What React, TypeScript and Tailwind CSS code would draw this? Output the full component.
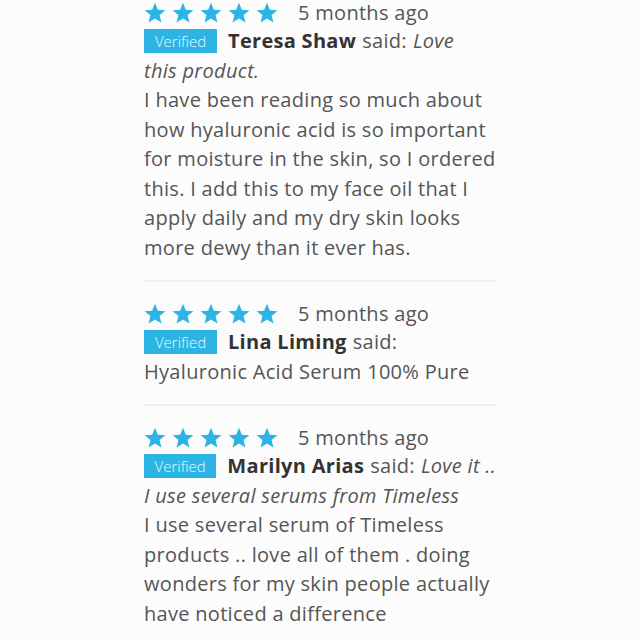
import React from 'react';

interface Review {
  name: string;
  // first part sits beside the name, the rest wraps to its own line
  titleFirst: string;
  titleRest?: string;
  titleItalic: boolean;
  body: string[];
}

const reviews: Review[] = [
  {
    name: 'Teresa Shaw',
    titleFirst: 'Love',
    titleRest: 'this product.',
    titleItalic: true,
    body: [
      'I have been reading so much about',
      'how hyaluronic acid is so important',
      'for moisture in the skin, so I ordered',
      'this. I add this to my face oil that I',
      'apply daily and my dry skin looks',
      'more dewy than it ever has.',
    ],
  },
  {
    name: 'Lina Liming',
    titleFirst: '',
    titleRest: 'Hyaluronic Acid Serum 100% Pure',
    titleItalic: false,
    body: [],
  },
  {
    name: 'Marilyn Arias',
    titleFirst: 'Love it ..',
    titleRest: 'I use several serums from Timeless',
    titleItalic: true,
    body: [
      'I use several serum of Timeless',
      'products .. love all of them . doing',
      'wonders for my skin people actually',
      'have noticed a difference',
    ],
  },
];

const Star = () => (
  <svg viewBox="0 0 24 24" className="w-[22px] h-[22px]" fill="#2bb4e4">
    <polygon points="12,0.8 15.1,8.4 23.3,9 17,14.3 19,22.3 12,17.9 5,22.3 7,14.3 0.7,9 8.9,8.4" />
  </svg>
);

const ReviewItem: React.FC<{ review: Review; last: boolean }> = ({ review, last }) => {
  const italic = review.titleItalic ? 'italic' : '';
  return (
    <div className={last ? '' : 'border-b-2 border-[#f0f0f2] pb-[18px] mb-[19px]'}>
      {/* rating */}
      <div className="flex items-center h-[25px]">
        <div className="flex gap-[6px]">
          {[0, 1, 2, 3, 4].map((i) => (
            <Star key={i} />
          ))}
        </div>
        <span className="ml-[20px] leading-[25px] text-[#555]">5 months ago</span>
      </div>
      {/* verified + name */}
      <div className="mt-[1px] flex items-center h-[29.5px] whitespace-nowrap">
        <span className="bg-[#2bb4e4] text-[#eaf8fd] text-[15px] leading-[24px] w-[73px] text-center font-light tracking-normal mr-[11px]">
          Verified
        </span>
        <span className="font-bold text-[#333]">{review.name}</span>
        <span className="text-[#555] ml-[6px]">said:</span>
        {review.titleFirst && (
          <span className={`text-[#555] ml-[6px] ${italic}`}>{review.titleFirst}</span>
        )}
      </div>
      {review.titleRest && (
        <div className={`text-[#555] whitespace-nowrap ${italic}`}>{review.titleRest}</div>
      )}
      {review.body.length > 0 && (
        <p className="text-[#555] whitespace-nowrap">
          {review.body.map((line, i) => (
            <span key={i} className="block">
              {line}
            </span>
          ))}
        </p>
      )}
    </div>
  );
};

export default function App() {
  return (
    <div className="min-h-[640px] bg-[#fcfcfc] font-['Open_Sans',sans-serif] text-[20px] leading-[29.5px] tracking-[0.3px]">
      <div className="mx-auto w-[352px]">
        {reviews.map((r, i) => (
          <ReviewItem key={i} review={r} last={i === reviews.length - 1} />
        ))}
      </div>
    </div>
  );
}
